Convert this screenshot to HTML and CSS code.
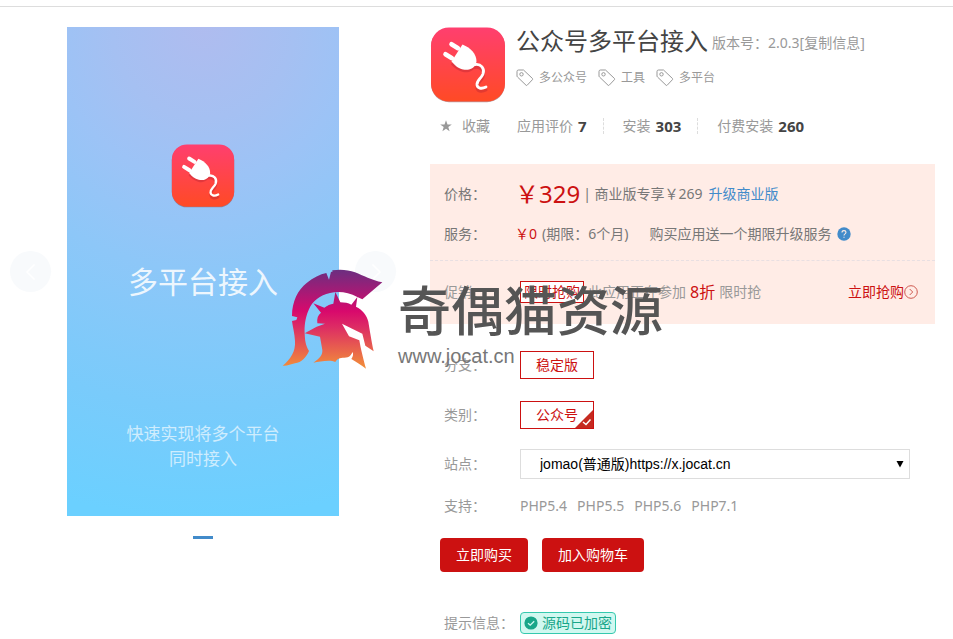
FILE: index.html
```html
<!DOCTYPE html>
<html lang="zh-CN">
<head>
<meta charset="utf-8">
<title>公众号多平台接入</title>
<meta name="viewport" content="width=device-width, initial-scale=1">
<link rel="stylesheet" href="styles.css">
</head>
<body>
<svg class="defs" width="0" height="0" aria-hidden="true">
  <defs>
    <linearGradient id="app-bg" x1="0" y1="0" x2="0" y2="1">
      <stop offset="0" stop-color="#ff3f6f"/>
      <stop offset="1" stop-color="#ff4a25"/>
    </linearGradient>
    <symbol id="app-icon" viewBox="0 0 76 76">
      <rect x="1" y="1.2" width="74" height="74" rx="18" fill="#7a4a58" opacity=".55"/>
      <rect x="1" y="0.5" width="74" height="74" rx="18" fill="url(#app-bg)"/>
      <g transform="translate(0 2)" fill="#b92433" stroke="#b92433" opacity=".4">
        <path stroke="none" d="M31.500 18.500C40 22 46.500 27 46.500 34.500L46 37C43 42.500 38 44 33 43C28 42 24 38.500 21 35.500Z"/>
        <path d="M45 38.500C51 37.500 55 42.500 53 48C51 53 46.500 54 47 59C47.500 62 51 63.500 56 61" fill="none" stroke-width="3" stroke-linecap="round"/>
      </g>
      <path fill="#fff" d="M32.500 17.500C41 21 46.500 27 46.500 34.500L46 37C43 42.500 38 43.500 33 42.500C28 41.500 24.500 38 21.500 34.500Z"/>
      <path d="M21.500 17.200L28 21.200M15.500 27.200L22 31.200" stroke="#fff" stroke-width="4.600" stroke-linecap="round"/>
      <path d="M45 37.500C51 36.500 55 41.500 53 47C51 52 46.500 53 47 58C47.500 61 51 62.500 56 60" fill="none" stroke="#fff" stroke-width="2.800" stroke-linecap="round"/>
    </symbol>
    <symbol id="tag-icon" viewBox="0 0 18 18">
      <path d="M1 2.500Q1 1 2.500 1H7.500L16.500 9.500Q17 10 16.500 10.600L11.200 16.200Q10.600 16.800 10 16.200L1.500 8Q1 7.500 1 7Z" fill="none" stroke="#999"/>
      <circle cx="5.500" cy="5.300" r="1.700" fill="none" stroke="#999"/>
    </symbol>
  </defs>
</svg>

<main class="product">
  <section class="gallery">
    <div class="carousel">
      <button class="arrow" type="button" aria-label="上一张">
        <svg width="10" height="16" viewBox="0 0 10 16"><path d="M8.500 0.500L1 8L8.500 15.500" fill="none" stroke="#fff" stroke-width="1.500"/></svg>
      </button>
      <div class="poster">
        <svg class="poster-icon" viewBox="0 0 76 76"><use href="#app-icon"/></svg>
        <div class="poster-title">多平台接入</div>
        <div class="poster-text">快速实现将多个平台<br>同时接入</div>
      </div>
      <button class="arrow" type="button" aria-label="下一张">
        <svg width="10" height="16" viewBox="0 0 10 16"><path d="M1.500 0.500L9 8L1.500 15.500" fill="none" stroke="#fff" stroke-width="1.500"/></svg>
      </button>
    </div>
    <div class="indicator"></div>
  </section>

  <section class="info">
    <header class="head">
      <svg class="app-icon" viewBox="0 0 76 76"><use href="#app-icon"/></svg>
      <div>
        <div class="title-row">
          <h1>公众号多平台接入</h1>
          <span class="version">版本号：2.0.3<a href="#">[复制信息]</a></span>
        </div>
        <ul class="tags">
          <li><svg class="tag-icon"><use href="#tag-icon"/></svg>多公众号</li>
          <li><svg class="tag-icon"><use href="#tag-icon"/></svg>工具</li>
          <li><svg class="tag-icon"><use href="#tag-icon"/></svg>多平台</li>
        </ul>
      </div>
    </header>

    <div class="stats">
      <button class="favorite" type="button">
        <svg width="12" height="12" viewBox="0 0 12 12"><path d="M6 0.300L7.500 4.400H11.800L8.300 7L9.600 11.300L6 8.700L2.400 11.300L3.700 7L0.200 4.400H4.500Z" fill="#999"/></svg>收藏
      </button>
      <span class="stat">应用评价<b>7</b></span>
      <span class="stat">安装<b>303</b></span>
      <span class="stat">付费安装<b>260</b></span>
    </div>

    <div class="offer">
      <div class="offer-main">
        <div class="offer-row">
          <span class="label">价格：</span>
          <span class="price">￥329</span>
          <span class="member">| 商业版专享￥269</span>
          <a class="upgrade" href="#">升级商业版</a>
        </div>
        <div class="offer-row">
          <span class="label">服务：</span>
          <span class="red">￥0</span>
          <span class="period">(期限：6个月)</span>
          <span class="service">购买应用送一个期限升级服务</span>
          <svg class="help" width="14" height="14" viewBox="0 0 14 14"><circle cx="7" cy="7" r="6.700" fill="#428bca"/><path d="M5 5.500Q5 3.600 7 3.600Q9 3.600 9 5.300Q9 6.200 8 6.900Q7 7.500 7 8.500M7 9.700V10.800" fill="none" stroke="#ffece6" stroke-width="1.100"/></svg>
        </div>
      </div>
      <div class="promo">
        <span class="label">促销：</span>
        <span class="flash">限时抢购</span>
        <span class="promo-text">此应用正在参加</span>
        <strong class="discount">8折</strong>
        <span>限时抢</span>
        <a class="grab" href="#">立即抢购<svg width="14" height="14" viewBox="0 0 14 14"><circle cx="7" cy="7" r="6.300" fill="none" stroke="#cf5a50"/><path d="M5.700 4L8.700 7L5.700 10" fill="none" stroke="#cf5a50"/></svg></a>
      </div>
    </div>

    <div class="row branch">
      <span class="label">分支：</span>
      <button class="option" type="button">稳定版</button>
    </div>
    <div class="row category">
      <span class="label">类别：</span>
      <button class="option" type="button">公众号<svg class="corner" width="18" height="18" viewBox="0 0 18 18"><path d="M18 0V18H0Z" fill="#c52a20"/><path d="M8 12L11 14.500L15.500 9.500" fill="none" stroke="#fff" stroke-width="1.500"/></svg></button>
    </div>
    <div class="row site">
      <label class="label" for="site">站点：</label>
      <div class="select-box">
        <select id="site"><option>jomao(普通版)https://x.jocat.cn</option></select>
        <svg class="caret" width="8" height="8" viewBox="0 0 8 8"><path d="M0.500 1H7.500L4 7.500Z" fill="#000"/></svg>
      </div>
    </div>
    <div class="row support">
      <span class="label">支持：</span>
      <span class="versions"><span>PHP5.4</span><span>PHP5.5</span><span>PHP5.6</span><span>PHP7.1</span></span>
    </div>
    <div class="actions">
      <button class="buy" type="button">立即购买</button>
      <button class="buy" type="button">加入购物车</button>
    </div>
    <div class="row notice">
      <span class="label">提示信息：</span>
      <span class="badge"><svg width="14" height="14" viewBox="0 0 14 14"><circle cx="7" cy="7" r="6.600" fill="#18a689"/><path d="M4 7.200L6.200 9.200L10.200 5.200" fill="none" stroke="#d1f8f0" stroke-width="1.300"/></svg>源码已加密</span>
    </div>
  </section>

  <div class="watermark">
    <svg width="140" height="125" viewBox="0 0 420 375" aria-hidden="true">
      <defs>
        <linearGradient id="helmet" gradientUnits="userSpaceOnUse" x1="0" y1="45" x2="0" y2="340">
          <stop offset="0" stop-color="#6c2e80"/>
          <stop offset=".42" stop-color="#d8096c"/>
          <stop offset=".58" stop-color="#dd2c64"/>
          <stop offset="1" stop-color="#f29039"/>
        </linearGradient>
      </defs>
      <g fill="url(#helmet)">
        <path d="M38 332C62 312 77 290 75 258C74 235 68 215 66 198L79 195L82 187L66 183C66 140 84 104 110 84C130 68 150 58 169 54L177 74L183 50L187 51V46C210 42 235 44 255 52C280 62 305 76 337 82L277 133L262 126C235 111 205 108 180 114C150 120 127 138 116 165C105 190 103 215 104 235C105 255 106 270 117 288C108 308 95 322 75 325C62 327 50 334 38 332Z"/>
        <path d="M142 205C140 190 144 180 153 173L130 145L163 158C172 151 181 147 190 146L196 111L211 142C223 142 235 144 244 149L262 126L258 155C278 165 290 180 295 200C299 225 305 260 311 289L286 272L277 236L216 206L237 244L268 256C272 280 280 312 288 341C272 330 262 322 244 312C250 303 250 297 248 291C243 300 238 310 218 308C205 309 200 314 196 321C180 313 150 320 130 323C150 310 158 300 157 285L150 245L104 235L140 215L165 206Z"/>
      </g>
    </svg>
    <div class="wm-text">
      <div class="wm-name">奇偶猫资源</div>
      <div class="wm-url">www.jocat.cn</div>
    </div>
  </div>
</main>
</body>
</html>
```
FILE: styles.css
```css
* { box-sizing: border-box; }

body {
  margin: 0;
  padding-top: 6px;
  background: #fff;
  color: #999;
  font: 14px/20px "Noto Sans", "Noto Sans CJK SC", sans-serif;
}

button, select { font: inherit; margin: 0; }
button { cursor: pointer; }
a { color: inherit; text-decoration: none; }
svg { display: block; flex: none; }
.defs { position: absolute; }

.product {
  position: relative;
  display: grid;
  grid-template-columns: minmax(0, 406fr) minmax(0, 505fr);
  gap: 24px;
  padding: 20px 18px 0 0;
  border-top: 1px solid #ddd;
}

/* Gallery */
.carousel {
  display: flex;
  align-items: center;
  justify-content: center;
  gap: 16px;
}
.arrow {
  display: grid;
  place-items: center;
  flex: none;
  width: 41px;
  height: 41px;
  padding: 0;
  border: 0;
  border-radius: 50%;
  background: #f8fafc;
}
.poster {
  flex: 0 1 272px;
  min-height: 489px;
  padding-top: 117px;
  background: radial-gradient(circle at 50% 0, #afbcef 0, #a5c0f2 18%, #9cc3f6 30%, #8dc7f8 48%, #79cbfb 75%, #6bd0ff 97%);
  color: #fff;
  text-align: center;
}
.poster-icon { width: 64px; height: 64px; margin: 0 auto; }
.poster-title {
  margin-top: 54px;
  font-size: 30px;
  line-height: 40px;
  opacity: .85;
}
.poster-text {
  margin-top: 119px;
  font-size: 17px;
  line-height: 25px;
  opacity: .65;
}
.indicator {
  width: 20px;
  height: 3px;
  margin: 20px auto 0;
  background: #428bca;
}

/* Heading */
.head { display: flex; gap: 10px; }
.app-icon { width: 76px; height: 76px; }
.title-row { display: flex; align-items: center; gap: 4px; white-space: nowrap; }
.version { padding-top: 4px; }
h1 {
  margin: 0;
  color: #444;
  font-size: 24px;
  line-height: 28px;
  font-weight: 400;
}
.tags {
  display: flex;
  gap: 11px;
  margin: 13px 0 0;
  padding: 0;
  list-style: none;
  font-size: 12px;
}
.tags li { display: flex; align-items: center; gap: 5px; }
.tag-icon { width: 18px; height: 18px; }

.stats { display: flex; align-items: center; margin: 13px 0 28px 10px; }
.favorite {
  display: flex;
  align-items: center;
  gap: 10px;
  margin-right: 27px;
  padding: 0;
  border: 0;
  background: none;
  color: #999;
}
.stat { display: flex; align-items: center; gap: 5px; }
.stat + .stat {
  position: relative;
  margin-left: 16px;
  padding-left: 20px;
}
.stat + .stat::before {
  content: "";
  position: absolute;
  left: 0;
  top: 2px;
  height: 16px;
  border-left: 1px dashed #ddd;
}
.stat b { color: #444; font-size: 15px; }

/* Price panel */
.offer { background: #ffece6; white-space: nowrap; }
.offer-main {
  padding: 10px 0 6px 14px;
  border-bottom: 1px dashed #e8dfe2;
  color: #777;
}
.offer-row { display: flex; align-items: center; height: 40px; }
.label { flex: none; width: 76px; }
.offer-row .label { width: 71px; }
.price { color: #c11; font-size: 24px; }
.member { margin-left: 3px; }
.upgrade { margin-left: 6px; color: #428bca; }
.red { color: #c11; }
.period { margin-left: 5px; }
.service { margin-left: 21px; }
.help { margin-left: 6px; }
.promo { display: flex; align-items: center; height: 63px; padding: 0 17px 2px 14px; }
.flash {
  padding: 0 3px;
  border: 1px solid #c11;
  background: #fff;
  color: #c11;
}
.promo-text { margin-left: 4px; }
.discount { margin: 0 4px; color: #c11; font-size: 16px; font-weight: 400; }
.grab { display: flex; align-items: center; margin-left: auto; color: #c11; }

/* Options */
.row { display: flex; align-items: center; padding-left: 14px; }
.branch { margin-top: 27px; }
.category { margin-top: 22px; }
.site { margin-top: 20px; }
.support { margin-top: 17px; }
.option {
  position: relative;
  height: 28px;
  padding: 0 15px;
  border: 1px solid #c11;
  background: #fff;
  color: #c11;
}
.corner { position: absolute; right: 0; bottom: 0; }
.select-box { position: relative; flex: 1; margin-right: 25px; }
.select-box select {
  display: block;
  width: 100%;
  height: 30px;
  padding: 0 19px;
  border: 1px solid #ddd;
  border-radius: 0;
  background: #fff;
  color: #000;
  font-family: "Liberation Sans", "Noto Sans CJK SC", sans-serif;
  appearance: none;
}
.caret { position: absolute; right: 6px; top: 11px; pointer-events: none; }
.versions { display: flex; gap: 10px; }

.actions { display: flex; gap: 14px; margin: 22px 0 40px 10px; }
.buy {
  height: 34px;
  padding: 0 16px;
  border: 0;
  border-radius: 4px;
  background: #c11;
  color: #fff;
}
.badge {
  display: flex;
  align-items: center;
  gap: 4px;
  height: 22px;
  padding: 0 3px;
  border: 1px solid #35c9ae;
  border-radius: 4px;
  background: #d1f8f0;
  color: #18a689;
}

/* Overlay mark */
.watermark {
  position: absolute;
  left: 270px;
  top: 248px;
  display: flex;
  color: #555;
  pointer-events: none;
  white-space: nowrap;
}
.wm-text { margin: 23px 0 0 -12px; }
.wm-name { font-size: 53px; line-height: 66px; font-weight: 500; }
.wm-url {
  font: 20px/24px "Liberation Sans", sans-serif;
  color: #777;
}
```
